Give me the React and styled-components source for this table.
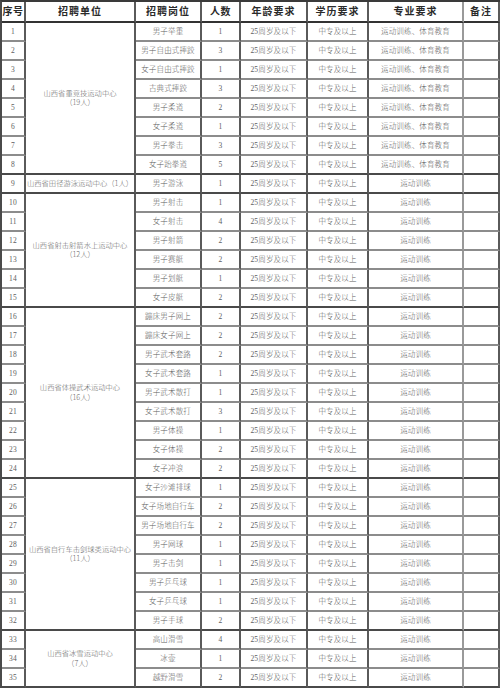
import React from 'react';
import styled, { createGlobalStyle } from 'styled-components';

const Global = createGlobalStyle`
  html, body { margin: 0; padding: 0; background: #fff; }
  body { width: 500px; height: 690px; overflow: hidden; }
`;

const Sheet = styled.div`
  display: grid;
  grid-template-columns: 24px 110px 66px 39px 67px 61px 95px 1fr;
  grid-template-rows: 21px;
  grid-auto-rows: 19px;
  width: 500px;
  box-sizing: border-box;
  border-top: 2px solid #3a3a3a;
  border-left: 2px solid #4a4a4a;
  font-family: "Liberation Serif", "Noto Sans CJK SC", serif;
  background: #fff;
`;

const Cell = styled.div`
  box-sizing: border-box;
  display: flex;
  flex-direction: column;
  align-items: center;
  justify-content: center;
  text-align: center;
  white-space: nowrap;
  overflow: hidden;
  border-right: 2px solid ${p => (p.$light ? '#9a9a9a' : '#5a5a5a')};
  border-bottom: ${p => (p.$dark ? '2px solid #4a4a4a' : '2px solid #8c8c8c')};
  font-size: 7.5px;
  line-height: 1.25;
  color: #5e5e5e;
  font-weight: 300;
  grid-row: ${p => (p.$span ? `span ${p.$span}` : 'auto')};
`;

const Head = styled(Cell)`
  font-family: "Noto Sans CJK SC", serif;
  font-size: 10px;
  font-weight: 700;
  color: #2a2a2a;
  letter-spacing: ${p => (p.$wide ? '1px' : '0.5px')};
  border-bottom: 2px solid #333;
`;

const Unit = styled(Cell)`
  font-family: "Noto Sans CJK SC", sans-serif;
  font-size: 7.3px;
  color: #666;
  border-bottom: 2px solid #4a4a4a;
`;

const Text = styled(Cell)`
  font-family: "Liberation Serif", "Noto Sans CJK SC", serif;
  letter-spacing: 0.15px;
`;

const groups = [
  {
    unit: ['山西省重竞技运动中心', '（19人）'],
    major: '运动训练、体育教育',
    rows: [
      ['男子举重', 1], ['男子自由式摔跤', 3], ['女子自由式摔跤', 1], ['古典式摔跤', 3],
      ['男子柔道', 2], ['女子柔道', 1], ['男子拳击', 3], ['女子跆拳道', 5],
    ],
  },
  {
    unit: ['山西省田径游泳运动中心（1人）'],
    major: '运动训练',
    rows: [['男子游泳', 1]],
  },
  {
    unit: ['山西省射击射箭水上运动中心', '（12人）'],
    major: '运动训练',
    rows: [
      ['男子射击', 1], ['女子射击', 4], ['男子射箭', 2], ['男子赛艇', 2],
      ['男子划艇', 1], ['女子皮艇', 2],
    ],
  },
  {
    unit: ['山西省体操武术运动中心', '（16人）'],
    major: '运动训练',
    rows: [
      ['蹦床男子网上', 2], ['蹦床女子网上', 2], ['男子武术套路', 2], ['女子武术套路', 1],
      ['男子武术散打', 1], ['女子武术散打', 3], ['男子体操', 1], ['女子体操', 2], ['女子冲浪', 2],
    ],
  },
  {
    unit: ['山西省自行车击剑球类运动中心', '（11人）'],
    major: '运动训练',
    rows: [
      ['女子沙滩排球', 1], ['女子场地自行车', 2], ['男子场地自行车', 2], ['男子网球', 1],
      ['男子击剑', 1], ['男子乒乓球', 1], ['女子乒乓球', 1], ['男子手球', 2],
    ],
  },
  {
    unit: ['山西省冰雪运动中心', '（7人）'],
    major: '运动训练',
    rows: [['高山滑雪', 4], ['冰壶', 1], ['越野滑雪', 2]],
  },
];

export default function App() {
  let n = 0;
  return (
    <>
      <Global />
      <Sheet>
        <Head>序号</Head>
        <Head $wide>招聘单位</Head>
        <Head $wide>招聘岗位</Head>
        <Head>人数</Head>
        <Head $wide>年龄要求</Head>
        <Head $wide>学历要求</Head>
        <Head $wide $light>专业要求</Head>
        <Head $wide>备注</Head>
        {groups.map((g, gi) =>
          g.rows.map(([pos, count], i) => {
            n += 1;
            const last = i === g.rows.length - 1;
            return (
              <React.Fragment key={`${gi}-${i}`}>
                <Text $dark={last}>{n}</Text>
                {i === 0 && (
                  <Unit $span={g.rows.length}>
                    {g.unit.map(line => (
                      <span key={line}>{line}</span>
                    ))}
                  </Unit>
                )}
                <Text $dark={last}>{pos}</Text>
                <Text $dark={last}>{count}</Text>
                <Text $dark={last}>25周岁及以下</Text>
                <Text $dark={last}>中专及以上</Text>
                <Text $dark={last} $light>{g.major}</Text>
                <Text $dark={last}></Text>
              </React.Fragment>
            );
          })
        )}
      </Sheet>
    </>
  );
}
